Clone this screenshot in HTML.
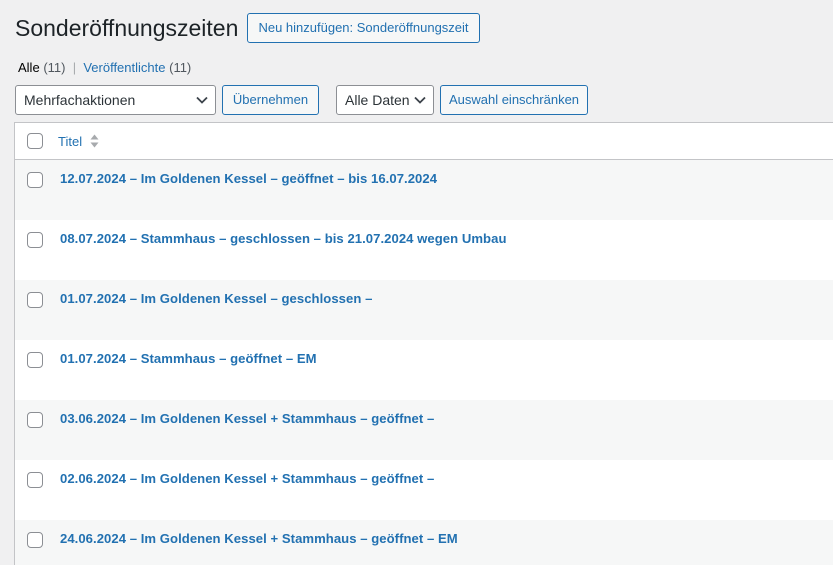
<!DOCTYPE html>
<html><head><meta charset="utf-8"><style>
*{box-sizing:border-box;margin:0;padding:0}
html{width:833px;height:565px;overflow:hidden}
body{width:833px;height:565px;overflow:hidden;background:#f0f0f1;font-family:"Liberation Sans",sans-serif;font-size:13px;color:#3c434a;position:relative}
.a{position:absolute}
h1{position:absolute;left:15px;top:13px;font-size:23px;font-weight:400;color:#1d2327;line-height:30px}
.btn{position:absolute;height:30px;border:1px solid #2271b1;border-radius:3px;color:#2271b1;background:#f6f7f7;font-size:13px;line-height:28px;text-align:center}
.sel{position:absolute;height:30px;border:1px solid #8c8f94;border-radius:3px;background:#fff;color:#2c3338;font-size:14px;line-height:28px;padding-left:8px}
.sel svg{position:absolute;right:7px;top:10px}
.tbl{position:absolute;left:14px;top:122px;width:830px;height:450px;border:1px solid #c3c4c7;background:#fff}
.row{position:absolute;left:0;width:100%;height:60px}
.cb{position:absolute;left:12px;width:16px;height:16px;border:1px solid #8c8f94;border-radius:4px;background:#fff}
.t{position:absolute;left:45px;color:#2271b1;font-weight:700;font-size:13.1px;letter-spacing:0.05px}
</style></head><body>
<h1>Sonderöffnungszeiten</h1>
<div class="btn" style="left:247px;top:13px;width:233px">Neu hinzufügen: Sonderöffnungszeit</div>
<div class="a" style="left:18px;top:60px;font-size:13px"><span style="color:#000">Alle</span> <span style="color:#50575e">(11)</span> <span style="color:#a7aaad">&nbsp;|&nbsp;</span> <span style="color:#2271b1">Veröffentlichte</span> <span style="color:#50575e">(11)</span></div>
<div class="sel" style="left:15px;top:85px;width:201px">Mehrfachaktionen<svg width="12" height="8" viewBox="0 0 12 8"><path d="M1 1.5l5 5 5-5" fill="none" stroke="#3c434a" stroke-width="1.8"/></svg></div>
<div class="btn" style="left:222px;top:85px;width:97px">Übernehmen</div>
<div class="sel" style="left:336px;top:85px;width:98px">Alle Daten<svg width="12" height="8" viewBox="0 0 12 8"><path d="M1 1.5l5 5 5-5" fill="none" stroke="#3c434a" stroke-width="1.8"/></svg></div>
<div class="btn" style="left:440px;top:85px;width:148px">Auswahl einschränken</div>
<div class="tbl">
<div class="row" style="top:0;height:37px;border-bottom:1px solid #c3c4c7">
<div class="cb" style="top:10px"></div>
<div class="a" style="left:43px;top:11px;color:#2271b1;font-size:13px">Titel</div>
<svg class="a" style="left:75px;top:10px" width="9" height="16" viewBox="0 0 9 16"><path d="M0.5 6.5L4.5 1.5 8.5 6.5Z M0.5 9.5L4.5 14.5 8.5 9.5Z" fill="#a7aaad"/></svg>
</div>
<div class="row" style="top:37px;background:#f6f7f7"><div class="cb" style="top:12px"></div><div class="t" style="top:11px">12.07.2024 – Im Goldenen Kessel – geöffnet – bis 16.07.2024</div></div>
<div class="row" style="top:97px"><div class="cb" style="top:12px"></div><div class="t" style="top:11px">08.07.2024 – Stammhaus – geschlossen – bis 21.07.2024 wegen Umbau</div></div>
<div class="row" style="top:157px;background:#f6f7f7"><div class="cb" style="top:12px"></div><div class="t" style="top:11px">01.07.2024 – Im Goldenen Kessel – geschlossen –</div></div>
<div class="row" style="top:217px"><div class="cb" style="top:12px"></div><div class="t" style="top:11px">01.07.2024 – Stammhaus – geöffnet – EM</div></div>
<div class="row" style="top:277px;background:#f6f7f7"><div class="cb" style="top:12px"></div><div class="t" style="top:11px">03.06.2024 – Im Goldenen Kessel + Stammhaus – geöffnet –</div></div>
<div class="row" style="top:337px"><div class="cb" style="top:12px"></div><div class="t" style="top:11px">02.06.2024 – Im Goldenen Kessel + Stammhaus – geöffnet –</div></div>
<div class="row" style="top:397px;background:#f6f7f7"><div class="cb" style="top:12px"></div><div class="t" style="top:11px">24.06.2024 – Im Goldenen Kessel + Stammhaus – geöffnet – EM</div></div>
</div>
</body></html>
